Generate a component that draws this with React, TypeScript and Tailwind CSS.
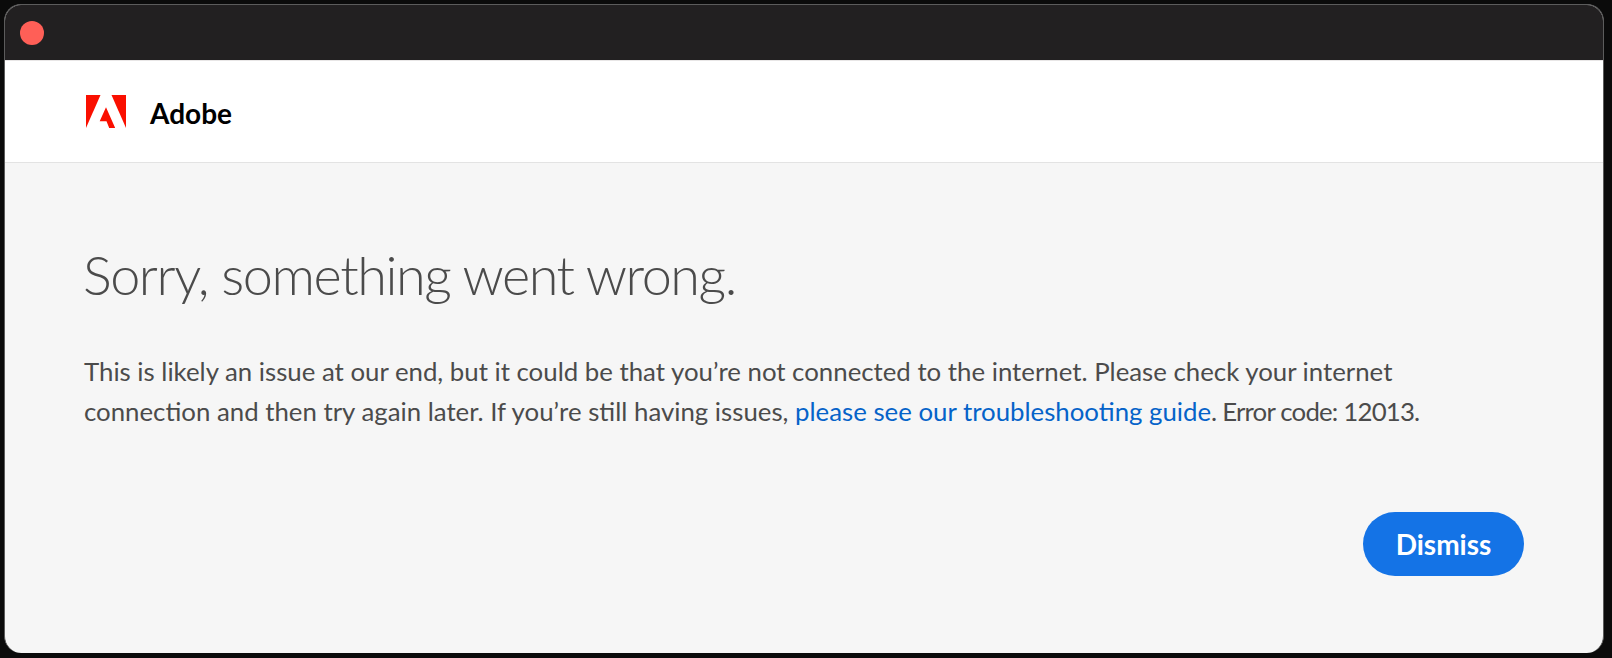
export default function App() {
  return (
    <div className="h-[658px] w-[1612px] bg-[#0b0b0b] pl-[4px] pr-[8px] pt-[4px] pb-[5px]">
      <div className="flex h-full flex-col overflow-hidden rounded-[17px] border-t border-l border-r border-[#5c5c5c] border-b-0 bg-[#f6f6f6] font-['Lato',sans-serif]">
        {/* Title bar */}
        <div className="flex h-[55px] shrink-0 items-center bg-[#222021] pl-[15px]">
          <div className="h-[24px] w-[24px] rounded-full bg-[#ff5f57]" />
        </div>

        {/* Header */}
        <div className="flex h-[103px] shrink-0 items-center gap-[24px] border-t border-b border-t-[#e8e6e6] border-b-[#e3e3e3] bg-white pl-[81px]">
          <svg width="40" height="33" viewBox="0 0 40 33">
            <path d="M0 0H14.5L0 33Z" fill="#fa0f00" />
            <path d="M25.5 0H40V33Z" fill="#fa0f00" />
            <path d="M20 12.2L29.2 33H23.2L20.5 26.2H13.7Z" fill="#fa0f00" />
          </svg>
          <span className="mt-[2px] text-[28px] font-bold leading-none text-black">Adobe</span>
        </div>

        {/* Content */}
        <div className="flex flex-1 flex-col pl-[79px] pr-[79px] pt-[78px]">
          <h1 className="ml-[-1px] text-[54px] font-light leading-[68px] tracking-[-1.45px] text-[#4b4b4b]">Sorry, something went wrong.</h1>
          <p className="mt-[42px] max-w-[1420px] text-[25.8px] leading-[40px] text-[#4b4b4b]">
            This is likely an issue at our end, but it could be that you’re not connected to the internet. Please check your internet connection and then try again later. If you’re still having issues,{" "}
            <a className="text-[#0563c9]">please see our troubleshooting guide</a>
            <span className="tracking-[-0.8px]">. Error code: 12013.</span>
          </p>
          <div className="mt-[81px] flex justify-end">
            <button className="h-[64px] w-[161px] rounded-full bg-[#1473e6] text-[28px] font-bold text-white">Dismiss</button>
          </div>
        </div>
      </div>
    </div>
  );
}
